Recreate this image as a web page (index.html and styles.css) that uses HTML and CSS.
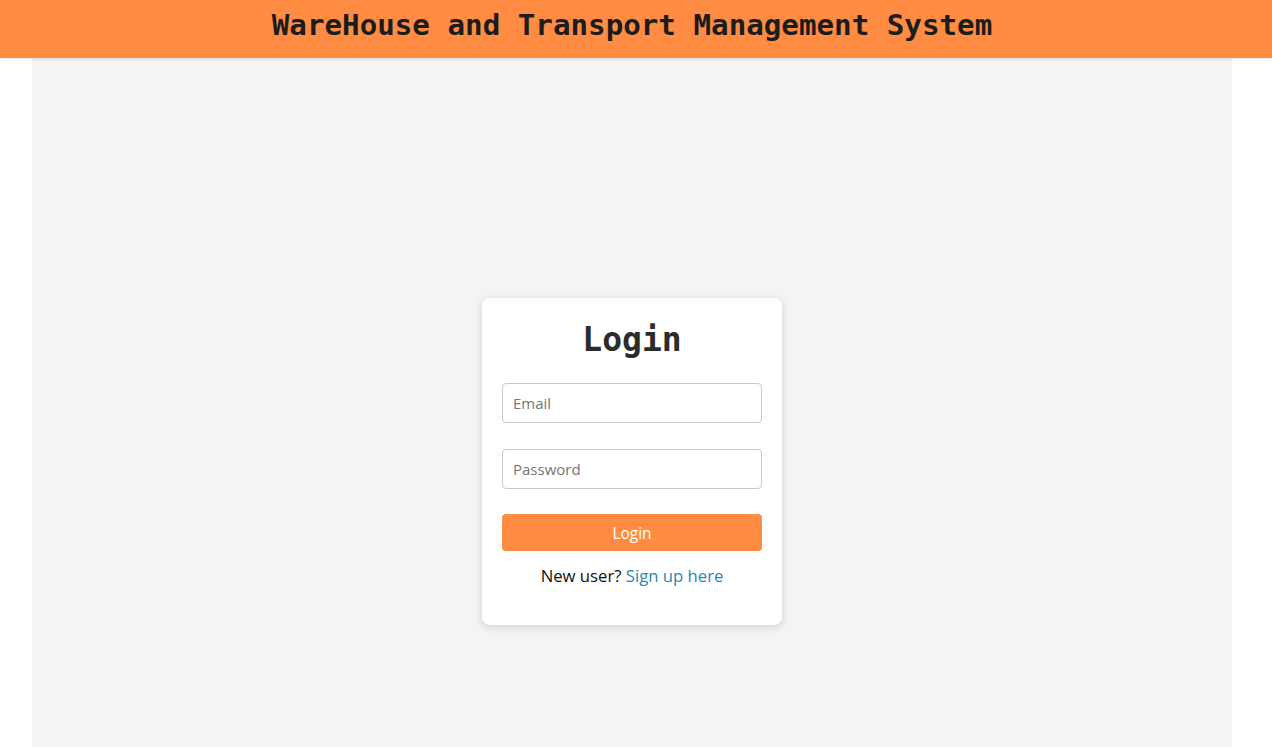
FILE: index.html
```html
<!DOCTYPE html>
<html lang="en">
<head>
<meta charset="utf-8">
<title>WareHouse and Transport Management System</title>
<link rel="stylesheet" href="styles.css">
</head>
<body>
<header class="topbar">
  <h1 class="topbar-title">WareHouse and Transport Management System</h1>
</header>
<main class="main">
  <form class="card">
    <h2 class="card-title">Login</h2>
    <input class="field" type="email" placeholder="Email">
    <input class="field" type="password" placeholder="Password">
    <button class="btn" type="button">Login</button>
    <p class="signup">New user? <a class="signup-link" href="#">Sign up here</a></p>
  </form>
</main>
</body>
</html>
```

FILE: styles.css
```css
* { box-sizing: border-box; }
html, body { margin: 0; padding: 0; }
body {
  background: #ffffff;
  font-family: "Open Sans", "Noto Sans", "Liberation Sans", sans-serif;
  min-height: 100vh;
  padding-right: 8px;
}
.topbar {
  height: 58px;
  background: #ff8c42;
  display: flex;
  justify-content: center;
  align-items: flex-start;
  padding-top: 5px;
  margin-right: -8px;
  padding-right: 8px;
  box-shadow: 0 1px 3px rgba(0,0,0,0.12);
  position: relative;
  z-index: 1;
}
.topbar-title {
  margin: 0;
  font-family: "DejaVu Sans Mono", "Liberation Mono", monospace;
  font-weight: bold;
  font-size: 29.2px;
  line-height: 40px;
  color: #1c1c1c;
}
.main {
  width: 1200px;
  margin: 0 auto;
  background: #f4f4f4;
  min-height: calc(100vh - 58px);
  display: flex;
  justify-content: center;
  align-items: flex-start;
  padding-top: 240px;
}
.card {
  width: 300px;
  background: #ffffff;
  border-radius: 8px;
  box-shadow: 0 2px 8px rgba(0,0,0,0.15);
  padding: 20px 20px 37px;
  display: flex;
  flex-direction: column;
}
.card-title {
  margin: 0 0 21px;
  text-align: center;
  font-family: "DejaVu Sans Mono", "Liberation Mono", monospace;
  font-weight: bold;
  font-size: 33px;
  line-height: 44px;
  color: #2b2b2b;
}
.field {
  height: 40px;
  width: 100%;
  border: 1px solid #c8c8c8;
  border-radius: 4px;
  padding: 0 10px;
  font-family: inherit;
  font-size: 15px;
  color: #333;
  margin: 0 0 26px;
  background: #fff;
}
.field + .field { margin-bottom: 25px; }
.field::placeholder { color: #757575; }
.btn {
  height: 37px;
  width: 100%;
  border: none;
  border-radius: 4px;
  background: #ff8c42;
  color: #ffffff;
  font-family: inherit;
  font-size: 15.5px;
  cursor: pointer;
}
.signup {
  margin: 13px 0 0;
  text-align: center;
  font-size: 16.7px;
  line-height: 24px;
  color: #111;
}
.signup-link {
  color: #2a86b8;
  text-decoration: none;
}
```
